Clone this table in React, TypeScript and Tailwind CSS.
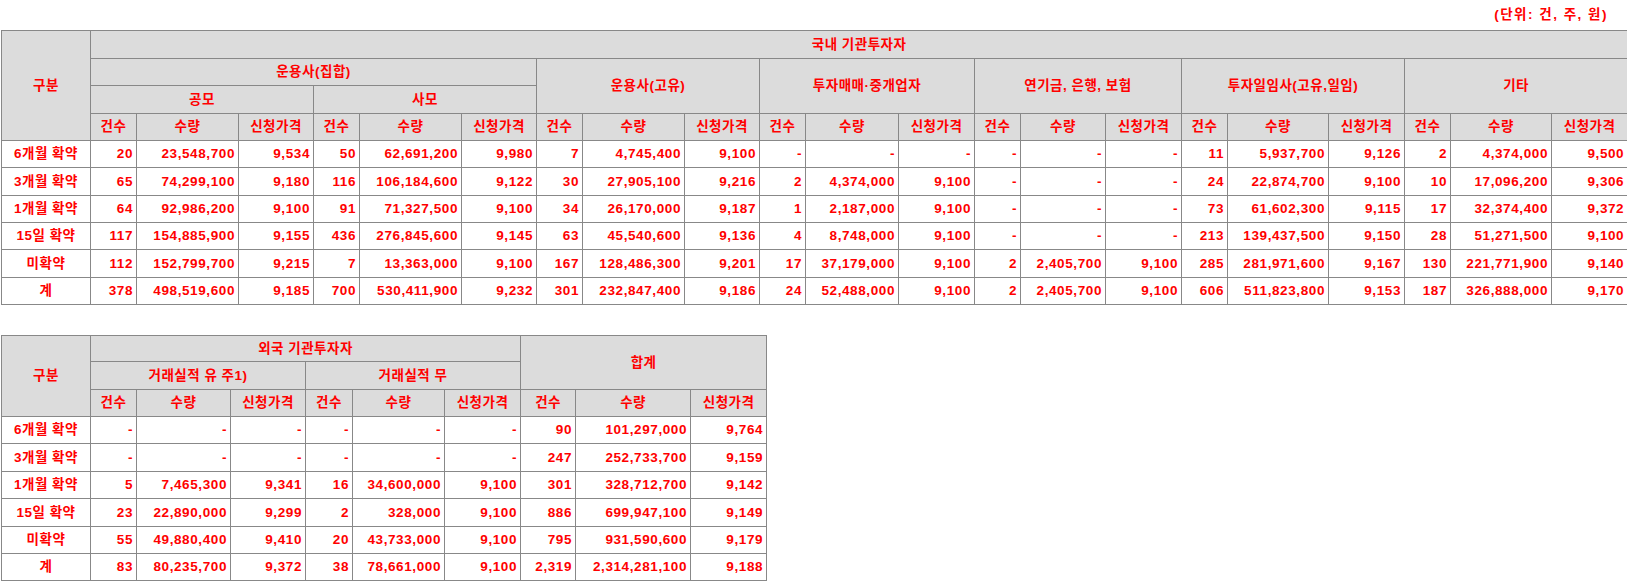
import React from "react";

const TOP_ROWS: [string, string[]][] = [
  ["6개월 확약", ["20", "23,548,700", "9,534", "50", "62,691,200", "9,980", "7", "4,745,400", "9,100", "-", "-", "-", "-", "-", "-", "11", "5,937,700", "9,126", "2", "4,374,000", "9,500"]],
  ["3개월 확약", ["65", "74,299,100", "9,180", "116", "106,184,600", "9,122", "30", "27,905,100", "9,216", "2", "4,374,000", "9,100", "-", "-", "-", "24", "22,874,700", "9,100", "10", "17,096,200", "9,306"]],
  ["1개월 확약", ["64", "92,986,200", "9,100", "91", "71,327,500", "9,100", "34", "26,170,000", "9,187", "1", "2,187,000", "9,100", "-", "-", "-", "73", "61,602,300", "9,115", "17", "32,374,400", "9,372"]],
  ["15일 확약", ["117", "154,885,900", "9,155", "436", "276,845,600", "9,145", "63", "45,540,600", "9,136", "4", "8,748,000", "9,100", "-", "-", "-", "213", "139,437,500", "9,150", "28", "51,271,500", "9,100"]],
  ["미확약", ["112", "152,799,700", "9,215", "7", "13,363,000", "9,100", "167", "128,486,300", "9,201", "17", "37,179,000", "9,100", "2", "2,405,700", "9,100", "285", "281,971,600", "9,167", "130", "221,771,900", "9,140"]],
  ["계", ["378", "498,519,600", "9,185", "700", "530,411,900", "9,232", "301", "232,847,400", "9,186", "24", "52,488,000", "9,100", "2", "2,405,700", "9,100", "606", "511,823,800", "9,153", "187", "326,888,000", "9,170"]],
];

const BOTTOM_ROWS: [string, string[]][] = [
  ["6개월 확약", ["-", "-", "-", "-", "-", "-", "90", "101,297,000", "9,764"]],
  ["3개월 확약", ["-", "-", "-", "-", "-", "-", "247", "252,733,700", "9,159"]],
  ["1개월 확약", ["5", "7,465,300", "9,341", "16", "34,600,000", "9,100", "301", "328,712,700", "9,142"]],
  ["15일 확약", ["23", "22,890,000", "9,299", "2", "328,000", "9,100", "886", "699,947,100", "9,149"]],
  ["미확약", ["55", "49,880,400", "9,410", "20", "43,733,000", "9,100", "795", "931,590,600", "9,179"]],
  ["계", ["83", "80,235,700", "9,372", "38", "78,661,000", "9,100", "2,319", "2,314,281,100", "9,188"]],
];

const TOP_COLS = [89, 46, 102, 75, 46, 102, 75, 46, 102, 75, 46, 93, 76, 46, 85, 76, 46, 101, 76, 46, 101, 76];
const BOTTOM_COLS = [89, 46, 94, 75, 47, 92, 76, 55, 115, 76];

const TOP_DATA_H = [27, 28, 27, 27, 28, 27];
const BOTTOM_DATA_H = [27, 28, 27, 28, 27, 27];

const th = "bg-[#dcdcdc] border border-[#888888] text-center align-middle p-0 font-bold whitespace-nowrap tracking-[0.5px]";
const tdLabel = "bg-white border border-[#888888] text-center align-middle p-0 font-bold whitespace-nowrap tracking-[0.5px]";
const tdNum = "bg-white border border-[#888888] text-right align-middle p-0 pr-[3px] font-bold whitespace-nowrap tracking-[0.6px]";

function SubHeads({ n }: { n: number }) {
  const out: React.ReactNode[] = [];
  for (let i = 0; i < n; i++) {
    out.push(
      <th key={`a${i}`} className={th}>건수</th>,
      <th key={`b${i}`} className={th}>수량</th>,
      <th key={`c${i}`} className={th}>신청가격</th>
    );
  }
  return <>{out}</>;
}

export default function App() {
  return (
    <div className="w-full overflow-hidden bg-white text-[#ff0000] text-[13.5px] leading-none font-[family-name:'Liberation_Sans','Noto_Sans_CJK_KR',sans-serif]">
      <div className="h-[30px] flex items-center justify-end pr-[19px] font-bold tracking-[1.5px]">(단위: 건, 주, 원)</div>
      <div className="pl-[1px]">
        <table className="table-fixed border-collapse border border-black w-[1626px]">
          <colgroup>
            {TOP_COLS.map((w, i) => (
              <col key={i} style={{ width: w }} />
            ))}
          </colgroup>
          <thead>
            <tr className="h-[28px]">
              <th rowSpan={4} className={th}>구분</th>
              <th colSpan={21} className={th}>국내 기관투자자</th>
            </tr>
            <tr className="h-[27px]">
              <th colSpan={6} className={th}>운용사(집합)</th>
              <th colSpan={3} rowSpan={2} className={th}>운용사(고유)</th>
              <th colSpan={3} rowSpan={2} className={th}>투자매매·중개업자</th>
              <th colSpan={3} rowSpan={2} className={th}>연기금, 은행, 보험</th>
              <th colSpan={3} rowSpan={2} className={th}>투자일임사(고유,일임)</th>
              <th colSpan={3} rowSpan={2} className={th}>기타</th>
            </tr>
            <tr className="h-[28px]">
              <th colSpan={3} className={th}>공모</th>
              <th colSpan={3} className={th}>사모</th>
            </tr>
            <tr className="h-[27px]">
              <SubHeads n={7} />
            </tr>
          </thead>
          <tbody>
            {TOP_ROWS.map(([label, vals], r) => (
              <tr key={r} style={{ height: TOP_DATA_H[r] }}>
                <td className={tdLabel}>{label}</td>
                {vals.map((v, i) => (
                  <td key={i} className={tdNum}>{v}</td>
                ))}
              </tr>
            ))}
          </tbody>
        </table>

        <div className="h-[30px]" />

        <table className="table-fixed border-collapse border border-black w-[765px]">
          <colgroup>
            {BOTTOM_COLS.map((w, i) => (
              <col key={i} style={{ width: w }} />
            ))}
          </colgroup>
          <thead>
            <tr className="h-[26px]">
              <th rowSpan={3} className={th}>구분</th>
              <th colSpan={6} className={th}>외국 기관투자자</th>
              <th colSpan={3} rowSpan={2} className={th}>합계</th>
            </tr>
            <tr className="h-[28px]">
              <th colSpan={3} className={th}>거래실적 유 주1)</th>
              <th colSpan={3} className={th}>거래실적 무</th>
            </tr>
            <tr className="h-[27px]">
              <SubHeads n={3} />
            </tr>
          </thead>
          <tbody>
            {BOTTOM_ROWS.map(([label, vals], r) => (
              <tr key={r} style={{ height: BOTTOM_DATA_H[r] }}>
                <td className={tdLabel}>{label}</td>
                {vals.map((v, i) => (
                  <td key={i} className={tdNum}>{v}</td>
                ))}
              </tr>
            ))}
          </tbody>
        </table>
      </div>
    </div>
  );
}
